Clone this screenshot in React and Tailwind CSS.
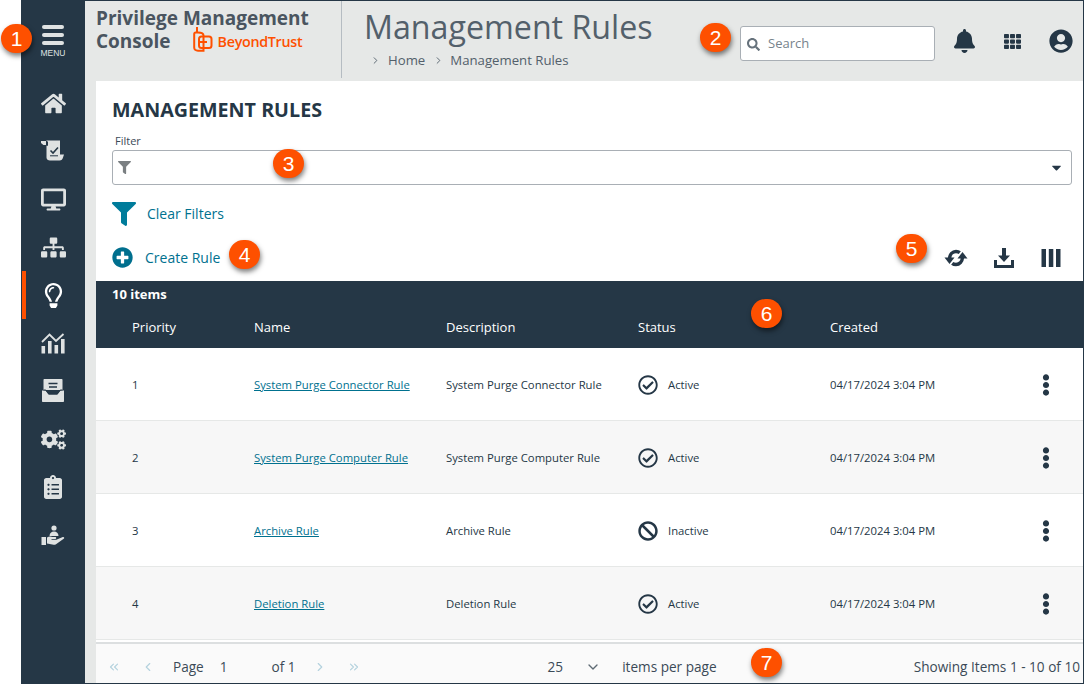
import React from 'react';
import {
  FaHome, FaDesktop, FaSitemap, FaRegLightbulb, FaCogs, FaClipboardList, FaBell, FaTh, FaUserCircle,
  FaFilter, FaPlusCircle, FaEllipsisV, FaRegCheckCircle, FaBan, FaCaretDown, FaSearch,
} from 'react-icons/fa';
import { ChevronsLeft, ChevronLeft, ChevronRight, ChevronsRight, ChevronDown } from 'lucide-react';

const ScrollIcon = () => (
  <svg width="24" height="24" viewBox="0 0 24 24" fill="currentColor">
    <path d="M0 2h5v4H2.400L0 4z" />
    <path d="M5 1.500h14v14h4l-1 3c-.5 1.800-1.500 3-3.500 3H9c-2 0-3.500-1.300-3.500-3V6.800H7V2.800z" />
    <path d="M9.500 11.500l2.500 2.500 5-5.500" fill="none" stroke="#253746" strokeWidth="1.600" />
    <path d="M9 16.800h8" stroke="#253746" strokeWidth="1" />
  </svg>
);

const ChartIcon = () => (
  <svg width="24" height="24" viewBox="0 0 24 24" fill="currentColor">
    <rect x="0.500" y="15" width="3.600" height="7.500" />
    <rect x="7" y="10" width="3.600" height="12.500" />
    <rect x="13.500" y="14" width="3.600" height="8.500" />
    <rect x="20" y="8" width="3.600" height="14.500" />
    <path d="M1 11l7.500-7.500 6.500 6.500L22.500 3" fill="none" stroke="currentColor" strokeWidth="1.800" />
  </svg>
);

const InboxIcon = () => (
  <svg width="24" height="24" viewBox="0 0 24 24" fill="currentColor">
    <path d="M3.500 0h17c.6 0 1 .4 1 1v10h-19V1c0-.6.4-1 1-1z" />
    <path d="M7.500 4.500h9M8 8h8" stroke="#253746" strokeWidth="1.600" />
    <path d="M1 11.500h3.500l3 4h9l3-4H23V22c0 .6-.4 1-1 1H2c-.6 0-1-.4-1-1z" />
    <path d="M2.500 11h2.300l3 4h8.400l3-4h2.300" fill="none" stroke="#253746" strokeWidth="1" />
  </svg>
);

const HandIcon = () => (
  <svg width="24" height="24" viewBox="0 0 24 24" fill="currentColor">
    <circle cx="13" cy="5" r="2.600" />
    <path d="M8.500 13c0-3 2-4.500 4.500-4.500s4.500 1.500 4.500 4.500z" />
    <rect x="0.500" y="14" width="4.500" height="8" />
    <path d="M6 14.500c2-1.300 3.800-1.200 5.500-.4h3c1 0 1 2-.2 2H10.500v.7h4.800l6.500-2.800c1.300-.4 2 1 .9 1.800l-7.700 5.400c-.8.500-1.500.6-2.400.5L6 20.500z" />
  </svg>
);

const SyncIcon = () => (
  <svg width="24" height="20" viewBox="0 0 24 20" fill="none">
    <path d="M5.500 10.500C5.800 6.500 8.500 3.500 12 3.500c1.500 0 2.800.4 3.800 1.200" stroke="currentColor" strokeWidth="3.400" />
    <path d="M18.500 9.500c-.3 4-3 7-6.500 7-1.500 0-2.800-.4-3.800-1.200" stroke="currentColor" strokeWidth="3.400" />
    <path d="M0.500 9.500h10l-5 6.500z" fill="currentColor" />
    <path d="M23.500 10.500h-10l5-6.500z" fill="currentColor" />
  </svg>
);

const DownloadIcon = () => (
  <svg width="20" height="20" viewBox="0 0 20 20" fill="currentColor">
    <path d="M8 0h4v7.500h4L10 14 4 7.500h4z" />
    <path d="M0 12h3v5h14v-5h3v8H0z" />
  </svg>
);

const ColumnsIcon = () => (
  <svg width="20" height="20" viewBox="0 0 20 20" fill="currentColor">
    <rect x="0.500" y="1" width="4.500" height="18" />
    <rect x="7.800" y="1" width="4.500" height="18" />
    <rect x="15" y="1" width="4.500" height="18" />
  </svg>
);

const LogoMark = () => (
  <svg width="20" height="26" viewBox="0 0 20 26" fill="none" stroke="#fe5000" strokeWidth="2">
    <path d="M4 1v6" />
    <path d="M1.200 8c0-1 .6-1.500 1.500-1.500h2.300c4 0 5.500 1.500 5.500 3v15.200H5c-2.500 0-3.800-1.200-3.800-3.200z" />
    <rect x="6" y="10.500" width="12.500" height="11.500" rx="2.500" />
    <path d="M6 16h8" />
  </svg>
);

const navItems = [
  { icon: <FaHome size={25} />, key: 'home' },
  { icon: <ScrollIcon />, key: 'scroll' },
  { icon: <FaDesktop size={25} />, key: 'desktop' },
  { icon: <FaSitemap size={25} />, key: 'sitemap' },
  { icon: <FaRegLightbulb size={25} />, key: 'rules', active: true },
  { icon: <ChartIcon />, key: 'chart' },
  { icon: <InboxIcon />, key: 'inbox' },
  { icon: <FaCogs size={25} />, key: 'cogs' },
  { icon: <FaClipboardList size={24} />, key: 'clipboard' },
  { icon: <HandIcon />, key: 'hand' },
];

const rows = [
  { priority: 1, name: 'System Purge Connector Rule', active: true },
  { priority: 2, name: 'System Purge Computer Rule', active: true },
  { priority: 3, name: 'Archive Rule', active: false },
  { priority: 4, name: 'Deletion Rule', active: true },
];

const cols = 'grid grid-cols-[158px_192px_192px_192px_1fr]';

const Badge = ({ n, className }) => (
  <div className={`absolute w-[31px] h-[29px] rounded-full bg-[#fe5000] text-white text-[21px] flex items-center justify-center shadow-[1px_3px_5px_rgba(0,0,0,0.5)] font-['Liberation_Sans',sans-serif] ${className}`}>
    {n}
  </div>
);

export default function App() {
  return (
    <div className="relative w-[1084px] h-[684px] overflow-hidden bg-white pl-[21px] font-['Open_Sans','Noto_Sans',sans-serif] text-[#253746]">
      <div className="flex h-full border-y border-r border-[#253746] bg-[#e6e8e7]">
        {/* sidebar */}
        <div className="w-[64px] shrink-0 bg-[#253746] text-[#dfe2e2] flex flex-col items-center">
          <div className="h-[78px] w-full pt-[24px] flex flex-col items-center">
            <div className="w-[22px] flex flex-col gap-[4px]">
              <div className="h-[4px] rounded-full bg-[#dfe2e2]" />
              <div className="h-[4px] rounded-full bg-[#dfe2e2]" />
              <div className="h-[4px] rounded-full bg-[#dfe2e2]" />
            </div>
            <span className="mt-[2px] text-[8.500px] leading-[12px] font-['Liberation_Sans',sans-serif]">MENU</span>
          </div>
          {navItems.map((item) => (
            <div key={item.key} className={`relative w-full h-[48px] flex items-center justify-center ${item.active ? 'text-white' : ''}`}>
              {item.active && <div className="absolute left-[1px] top-0 w-[4px] h-full bg-[#fe5000]" />}
              {item.icon}
            </div>
          ))}
        </div>

        <div className="flex-1 flex flex-col min-w-0">
          {/* header */}
          <div className="h-[80px] shrink-0 flex">
            <div className="w-[257px] shrink-0 pl-[11px] pt-[6px] text-[#4a5560] font-bold text-[19px] leading-[23px] border-r border-[#b5bcc2] mb-[3px]">
              <div>Privilege Management</div>
              <div className="flex items-center">
                Console
                <span className="ml-[22px] -mt-[6px]"><LogoMark /></span>
                <span className="ml-[5px] text-[14.300px] tracking-[-0.3px] text-[#fe5000] font-semibold">BeyondTrust</span>
              </div>
            </div>
            <div className="w-[398px] shrink-0 pl-[22px]">
              <div className="text-[32.200px] leading-[44px] mt-[4px] text-[#53606b]">Management Rules</div>
              <div className="flex items-center text-[13.200px] leading-[18px] mt-[2px] ml-[6px] text-[#53606b]">
                <ChevronRight size={11} />
                <span className="ml-[7px]">Home</span>
                <ChevronRight size={11} className="ml-[8px]" />
                <span className="ml-[6px]">Management Rules</span>
              </div>
            </div>
            <div className="flex-1 flex items-start pt-[25px]">
              <div className="w-[195px] h-[35px] bg-white border border-[#a9afb5] rounded-[3px] flex items-center pl-[6px] pt-[1px] text-[13px] text-[#77838c]">
                <FaSearch size={13} className="text-[#66727c]" />
                <span className="ml-[8px]">Search</span>
              </div>
              <div className="ml-[18px] mt-[3px] w-[23px] flex justify-center"><FaBell size={24} /></div>
              <div className="ml-[28px] mt-[7px]"><FaTh size={17} /></div>
              <div className="ml-[28px] mt-[3px]"><FaUserCircle size={24} /></div>
            </div>
          </div>

          {/* content */}
          <div className="flex-1 ml-[11px] bg-white flex flex-col min-h-0">
            <div className="pl-[16px] pr-[11px]">
              <h1 className="mt-[17px] text-[19.700px] leading-[24px] font-bold">MANAGEMENT RULES</h1>
              <div className="mt-[12px] ml-[3px] text-[11px] leading-[14px] text-[#3b4a57]">Filter</div>
              <div className="mt-[2px] h-[35px] border border-[#a9afb5] rounded-[3px] flex items-center justify-between pl-[5px] pr-[7px]">
                <FaFilter size={13} className="text-[#7a7f82]" />
                <FaCaretDown size={15} />
              </div>
              <div className="mt-[16px] h-[27px] flex items-center text-[#00718f]">
                <FaFilter size={24} className="text-[#007c9b] -mt-[2px]" />
                <span className="ml-[11px] text-[14px] mb-[2px]">Clear Filters</span>
              </div>
              <div className="mt-[16px] h-[27px] flex items-center">
                <FaPlusCircle size={21} className="text-[#006f8e]" />
                <span className="ml-[12px] text-[14px] text-[#00718f]">Create Rule</span>
                <div className="ml-auto flex items-center pr-[11px]">
                  <SyncIcon />
                  <span className="ml-[26px]"><DownloadIcon /></span>
                  <span className="ml-[27px]"><ColumnsIcon /></span>
                </div>
              </div>
            </div>

            {/* table */}
            <div className="mt-[10px] h-[67px] shrink-0 bg-[#253746] text-white">
              <div className="pt-[5px] pl-[16px] text-[13px] leading-[17px] font-bold">10 items</div>
              <div className={`${cols} mt-[15px] text-[13px] leading-[18px]`}>
                <span className="pl-[36px]">Priority</span>
                <span>Name</span>
                <span>Description</span>
                <span>Status</span>
                <span>Created</span>
              </div>
            </div>
            {rows.map((row, i) => (
              <div key={row.priority} className={`${cols} h-[73px] shrink-0 pt-[2px] items-center text-[11.300px] border-b border-[#e6e8e7] ${i % 2 ? 'bg-[#f7f7f7]' : 'bg-white'}`}>
                <span className="pl-[36px]">{row.priority}</span>
                <a className="underline text-[#00718f]">{row.name}</a>
                <span>{row.name}</span>
                <span className="flex items-center">
                  {row.active ? <FaRegCheckCircle size={20} /> : <FaBan size={20} />}
                  <span className="ml-[10px]">{row.active ? 'Active' : 'Inactive'}</span>
                </span>
                <span className="flex items-center justify-between">
                  04/17/2024 3:04 PM
                  <FaEllipsisV size={22} className="mr-[26px]" />
                </span>
              </div>
            ))}

            {/* pagination */}
            <div className="mt-[2px] flex-1 bg-[#fafafa] border-t-2 border-[#dcdfe0] flex items-center pl-[11px] pr-[3px] pt-[7px] text-[13.600px] text-[#3b4a57]">
              <ChevronsLeft size={14} className="text-[#b4d2de]" />
              <ChevronLeft size={14} className="ml-[20px] text-[#b4d2de]" />
              <span className="ml-[18px]">Page</span>
              <span className="ml-[16px]">1</span>
              <span className="ml-[44px]">of 1</span>
              <ChevronRight size={14} className="ml-[17px] text-[#b4d2de]" />
              <ChevronsRight size={14} className="ml-[20px] text-[#b4d2de]" />
              <span className="ml-[187px]">25</span>
              <ChevronDown size={16} className="ml-[22px] text-[#5e6a74]" />
              <span className="ml-[21px]">items per page</span>
              <span className="ml-auto">Showing Items 1 - 10 of 10</span>
            </div>
          </div>
        </div>
      </div>

      <Badge n="1" className="left-[1px] top-[24px]" />
      <Badge n="2" className="left-[700px] top-[23px]" />
      <Badge n="3" className="left-[273px] top-[149px]" />
      <Badge n="4" className="left-[229px] top-[240px]" />
      <Badge n="5" className="left-[896px] top-[234px]" />
      <Badge n="6" className="left-[751px] top-[299px]" />
      <Badge n="7" className="left-[751px] top-[648px]" />
    </div>
  );
}
